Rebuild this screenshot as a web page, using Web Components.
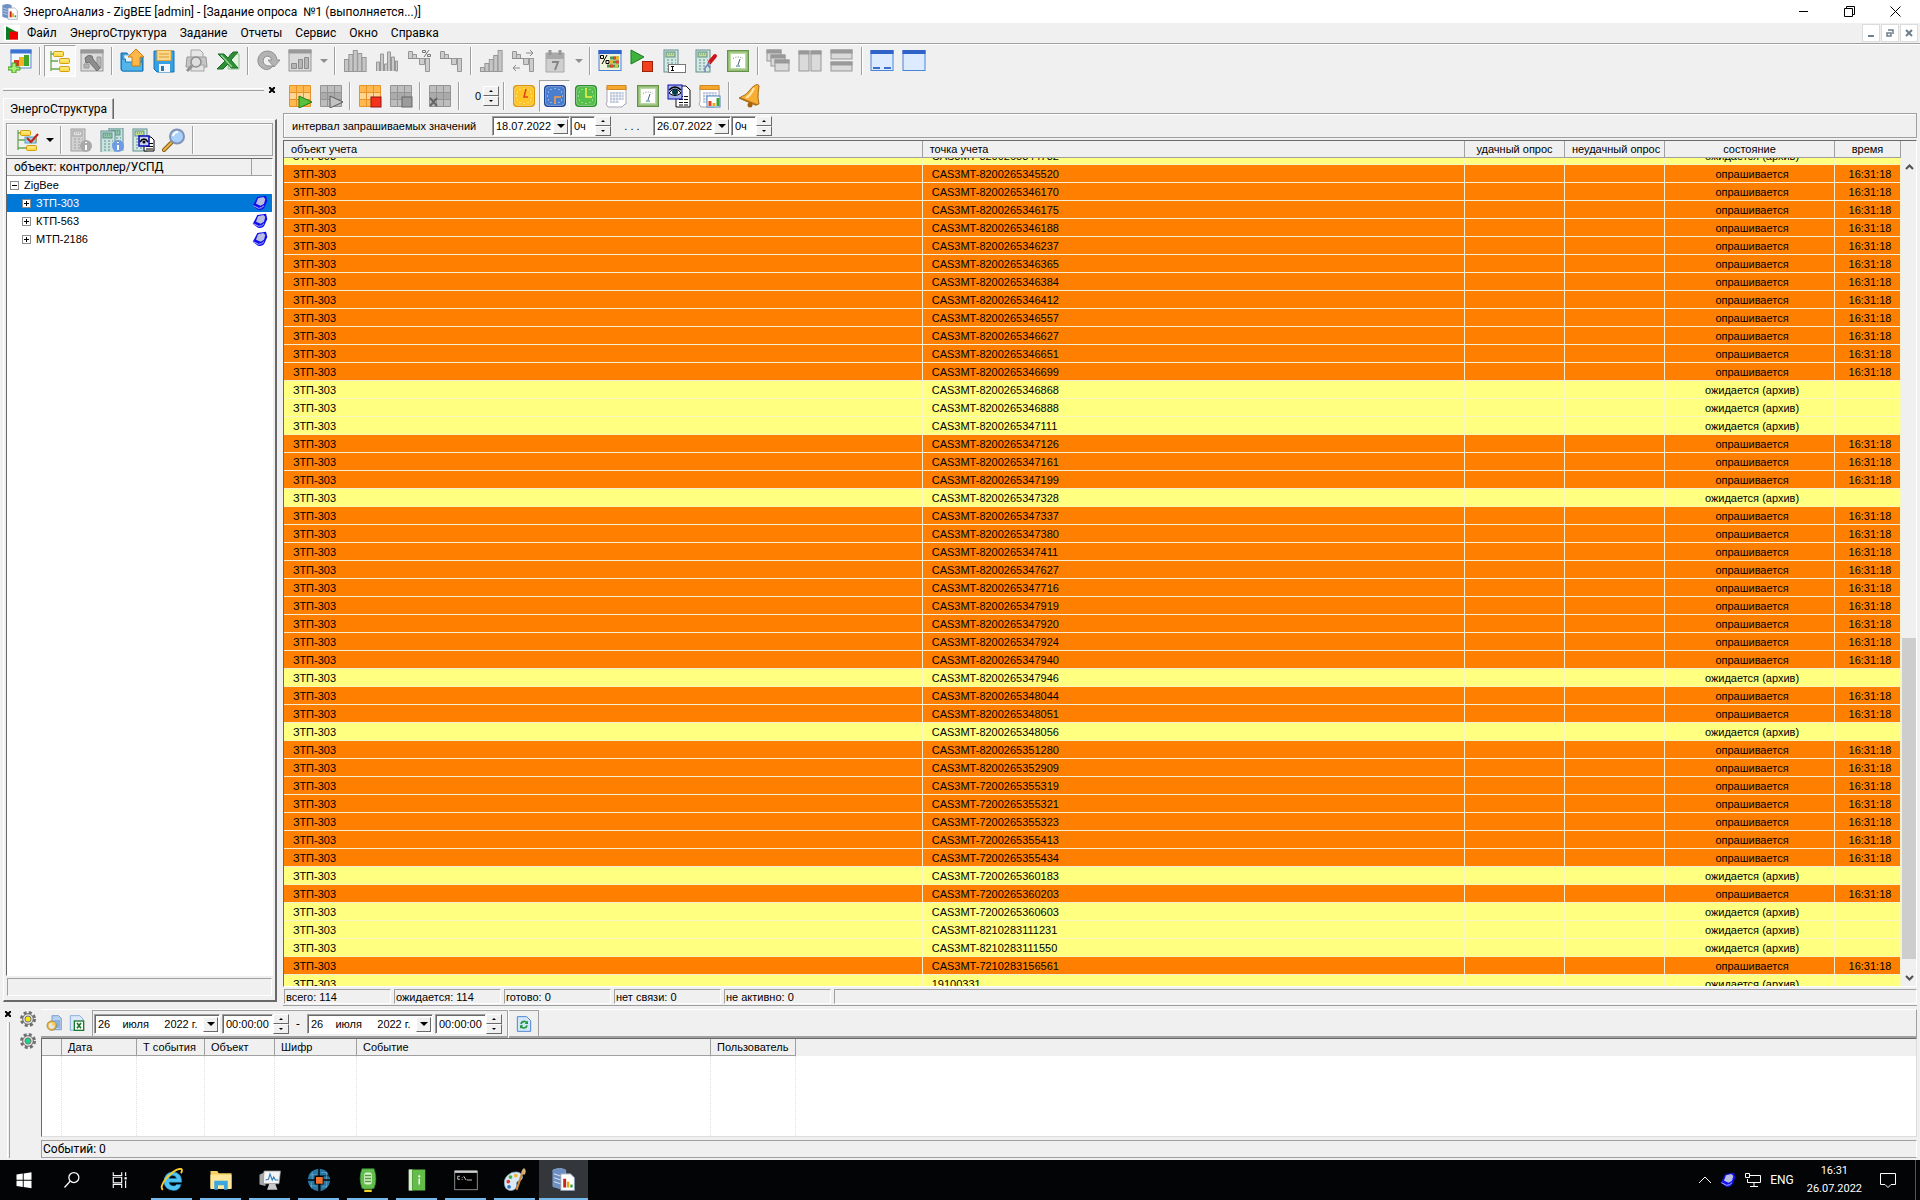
<!DOCTYPE html>
<html lang="ru">
<head>
<meta charset="utf-8">
<title>ЭнергоАнализ - ZigBEE</title>
<style>
    html, body {
        height: 100%;
        margin: 0;
    }
    body {
        --face: #f0f0f0;
        --shadow: #a0a0a0;
        --dark: #696969;
        --ui: Roboto, "Open Sans", sans-serif;
        --grid: "Liberation Sans", Arial, sans-serif;
        display: flex;
        flex-direction: column;
        overflow: hidden;
        background: var(--face);
        color: #000;
        font: 12px/16px var(--ui);
    }
    main {
        flex: 1;
        display: flex;
        min-height: 0;
    }
    .work {
        flex: 1;
        min-width: 0;
        display: flex;
        flex-direction: column;
        padding: 0 3px 0 2px;
    }
</style>
</head>
<body>
    <title-bar>ЭнергоАнализ - ZigBEE [admin] - [Задание опроса &nbsp;№1 (выполняется...)]</title-bar>
    <menu-bar items="Файл|ЭнергоСтруктура|Задание|Отчеты|Сервис|Окно|Справка"></menu-bar>
    <tool-strip></tool-strip>
    <main>
        <structure-dock></structure-dock>
        <div class="work">
            <tool-strip compact></tool-strip>
            <interval-bar></interval-bar>
            <poll-table></poll-table>
            <status-strip items="всего: 114|ожидается: 114|готово: 0|нет связи: 0|не активно: 0|"></status-strip>
        </div>
    </main>
    <event-dock></event-dock>
    <task-bar></task-bar>

<script>
// shared pieces used by several icons
const bars = h => h.map((v, i) => `<rect x="${1.5 + i * 4.4}" y="${22.5 - v}" width="4" height="${v}" fill="#c6c6c6" stroke="#979797"/>`).join("");
const win = (x, y, w, h, head, body, line) => `<rect x="${x}" y="${y}" width="${w}" height="${h}" fill="${body}" stroke="${line}"/><rect x="${x}" y="${y}" width="${w}" height="3" fill="${head}" stroke="${head}"/>`;
const cells = (a, b, c) => `<rect x="1" y="1" width="22" height="22" rx="1" fill="${c}"/>` +
    [0, 1, 2].map(r => [0, 1, 2].map(q => `<rect x="${2 + q * 7}" y="${2 + r * 7}" width="6" height="6" fill="${r == 1 ? b : a}"/>`).join("")).join("");
const meter = (a, b, c) => `<rect x="2" y="1" width="14" height="22" fill="${a}" stroke="${b}"/><rect x="4" y="3" width="9" height="5" fill="${c}" stroke="${b}"/>
    <path d="M6 5h1m1 0h1m1 0h1M5 11h2m2 0h2m2 0h1M5 14h2m2 0h2m2 0h1M5 17h2m2 0h2M5 20h2m2 0h2" stroke="${b}"/>`;
const clock = (a, b, hands, color) => `<rect x="1" y="1" width="22" height="22" rx="4" fill="${b}"/><rect x="2.5" y="2.5" width="19" height="19" rx="3" fill="${a}" stroke="#fff" stroke-opacity=".35"/>
    <path d="M12 4v1M12 19v1M4 12h1M19 12h1M8 5v1M16 5v1M5 8h1M18 8h1M5 16h1M18 16h1M8 18v1M16 18v1" stroke="#fff" stroke-opacity=".8"/><path d="${hands}" fill="none" stroke="${color}" stroke-width="1.5"/>`;
const treeShape = `<path d="M3 2v20M3 5h3M3 12h7M3 20h8" stroke="#6aa552" fill="none" stroke-width="1.3"/>` +
    [[5, 2], [11, 9], [11, 17]].map(p => `<rect x="${p[0]}.5" y="${p[1]}.5" width="10" height="5" rx="1" fill="#ffdc4e" stroke="#d29f12"/><path d="M${p[0] + 2} ${p[1] + 2}h7" stroke="#fff3ac"/>`).join("");
const calendar = `<path d="M2 3h19v17h-1l-3 3H3l-2-3 1-2z" fill="#fff" stroke="#a9a3b4"/><rect x="2" y="1.5" width="19" height="4" fill="#f5a62c" stroke="#d08a20"/><path d="M5 9h13M5 12h13M5 15h13M5 18h9M6 8v11M9 8v11M12 8v11M15 8v8M18 8v8" stroke="#9aa6c8" stroke-width=".7"/>`;
const gear = c => `<circle cx="12" cy="12" r="9.5" fill="none" stroke="#6f6f6f" stroke-width="5" stroke-dasharray="4.3 3.16"/>
    <circle cx="12" cy="12" r="8" fill="#dcdcdc" stroke="#6f6f6f" stroke-width="1.5"/><circle cx="12" cy="12" r="4.5" fill="${c}" stroke="#777" stroke-width="1.5"/>`;
const stepDown = `<path d="M1.5 2.5h4v7h-4zM5.5 5.5h4v4h-4z" fill="#cdcdcd" stroke="#979797"/><path d="M1 9.5h22" stroke="#8e8e8e"/><path d="M12.5 9.5h5v6h-5zM18.5 9.5h4v13h-4z" fill="#cdcdcd" stroke="#979797"/>`;
const screenBlue = win(1, 1.5, 22, 20, "#2f63c8", "#dcebff", "#4a84d6");
const grayWin = (x, y, w, h) => win(x, y, w, h, "#999", "#dadada", "#979797");
const grayCells = cells("#bdbdbd", "#ababab", "#949494");
const orangeCells = cells("#ffb94f", "#ffd694", "#e8932a");
const waterMeter = meter("#d4e8e4", "#5f8e8c", "#c0dc90");

const icons = {
    app: `<path d="M1 2l7-2 6 2v17l-6 2-7-2z" fill="#6d8fc4" stroke="#7f9cc8"/><path d="M2 6l6 2 6-2M2 10l6 2 6-2M2 14l6 2 6-2" stroke="#dbe7f8" fill="none"/><path d="M9 6h10l4 4v13H9z" fill="#fff" stroke="#8b9ab3"/><path d="M13 11v9" stroke="#c9231b" stroke-width="3"/><path d="M16.5 14v6" stroke="#e6a417" stroke-width="2.5"/><path d="M20 17v3" stroke="#36a13a" stroke-width="2.5"/>`,
    mdi: `<rect width="24" height="24" fill="#fff"/><path d="M3 2l17 9v2H9v9H3z" fill="#0a7d1c"/><rect x="9" y="10" width="12" height="12" fill="#f00000"/>`,
    newJob: win(3, 1, 20, 18, "#3c74d4", "#f4f8ff", "#5b87c9") + `<rect x="6" y="11" width="5" height="6" fill="#d93a1c"/><rect x="11" y="8" width="5" height="9" fill="#f0b321"/><rect x="16" y="6" width="5" height="11" fill="#3fa52b"/><path d="M4 14h4v4h4v3H8v3H4v-3H0v-3h4z" fill="#a9ee78" stroke="#3d9b1d"/>`,
    tree: treeShape,
    wrench: grayWin(1, 1, 22, 21) + `<path d="M4 15v4h5v-4zM17 8v11h4V8z" fill="#b5b5b5" stroke="#999"/><path d="M5 9q3-4 7-2l1 3 7 9-3 3-8-9-3 1z" fill="#8d8d8d" stroke="#6f6f6f"/>`,
    open: `<path d="M1 4h6l2 3h14v15H3q-2 0-2-2z" fill="#2b95d8" stroke="#1270b4"/><rect x="4" y="6" width="16" height="12" fill="#e9f5fc" stroke="#7fb6d8"/><path d="M1.5 10h4v3h17v9H3q-1.5 0-1.5-2z" fill="#53b4ea" stroke="#1a7cc0"/><path d="M16 0l8 8h-4v9h-8V8H8z" fill="#ffb74a" stroke="#c97f13"/>`,
    save: `<path d="M2 2h20v21H5l-3-3z" fill="#37a0e2" stroke="#1773b5"/><rect x="5" y="1.5" width="14" height="10" fill="#ffd98a" stroke="#e0a63c"/><path d="M7 5h10M7 8h10" stroke="#d79a35"/><rect x="7" y="15" width="11" height="8" fill="#f2f5f8"/><rect x="9" y="17" width="3" height="5" fill="#2676b0"/>`,
    printView: `<path d="M7 8V1h9l3 3v4" fill="#e6e6e6" stroke="#a5a5a5"/><path d="M3 8h19l1 10H2z" fill="#c6c6c6" stroke="#999"/><rect x="7" y="16" width="13" height="6" fill="#e4e4e4" stroke="#a5a5a5"/><circle cx="12" cy="13" r="5" fill="#dedede" stroke="#8f8f8f" stroke-width="1.5"/><path d="M8 17l-5 5" stroke="#929292" stroke-width="3"/>`,
    excel: `<path d="M14 5h9v15H12z" fill="#e4f3e2" stroke="#8fbf8f"/><path d="M2 5h6l4 4 5-6h5l-7 8 7 8h-7l-3-4-5 5H1l8-8z" fill="#2e8f36" stroke="#1b6b26"/><path d="M5 6l11 12" stroke="#8fd68c" stroke-width="1.5"/>`,
    redo: `<path d="M17 17q-4 5-9 3-7-3-6-10Q4 2 12 2q8 1 9 9h3l-6 7-6-7h4q-1-4-5-4-4 1-4 5 1 5 6 5z" fill="#b3b3b3" stroke="#909090"/>`,
    chartOff: grayWin(1, 1, 22, 21) + `<path d="M3.5 14.5h5v5h-5zM10.5 10.5h4v9h-4zM16.5 8.5h4v11h-4z" fill="#b5b5b5" stroke="#8c8c8c"/>`,
    bars1: bars([12, 17, 21, 18, 14]),
    bars2: `<path d="M1.5 22V13h3v9M5.5 22V5h3v17M9.5 22v-7h3v7M12.5 22V3h3v19M16.5 22V8h3v14M20.5 22V12h2v10z" fill="#c9c9c9" stroke="#979797"/>`,
    stepPct: stepDown + `<path d="M17 8l5-7M15.5 1.5h3v2h-3zM20.5 5.5h3v2h-3z" fill="none" stroke="#777"/>`,
    step: stepDown,
    rise: bars([4, 8, 12, 16, 21]),
    stepMove: stepDown + `<path d="M15 4h7m-3-3l3 3-3 3M9 19H2m3-3l-3 3 3 3" fill="none" stroke="#8a8a8a"/>`,
    dayOff: `<path d="M3 4h18v19H3z" fill="#cfcfcf" stroke="#a8a8a8"/><path d="M3 4h18v6H3z" fill="#a9a9a9"/><path d="M7 1v5M17 1v5" stroke="#979797" stroke-width="3"/><path d="M9 13h6l-3 8" fill="none" stroke="#858585" stroke-width="2"/>`,
    percent: screenBlue + `<path d="M2 5h20v16H2z" fill="#f1f4da"/><path d="M12 9h9M12 13h9M9 17h12" stroke="#3e9d4b" stroke-width="3"/><path d="M15 9h3M18 13h3M12 17h3" stroke="#e2442f" stroke-width="3"/><path d="M18 9h3M12 13h3M17 17h3" stroke="#f2b52a" stroke-width="3"/><path d="M9 6l-5 9M2.5 6.5h3v3h-3zM8 11.5h3v3H8z" fill="none" stroke="#000"/>`,
    runStop: `<path d="M1 1l13 7-13 7z" fill="#3fb13d" stroke="#187d1c"/><rect x="12.5" y="12.5" width="10" height="10" fill="#f0411c" stroke="#9d2308"/>`,
    meterText: waterMeter + `<rect x="6.5" y="15.5" width="17" height="8" fill="#fff" stroke="#777"/><path d="M9 17.5h3M9 21.5h3M10.5 17v5" stroke="#000"/>`,
    meterTool: waterMeter + `<path d="M16 13l5-6" stroke="#d01414" stroke-width="4" stroke-linecap="round"/><path d="M16 13l-5 6v4M14 16l2 3" stroke="#7382bb" fill="none" stroke-width="1.5"/>`,
    gauge: `<rect x="1.5" y="1.5" width="21" height="21" fill="#8fba70" stroke="#64914a"/><rect x="3.5" y="3.5" width="17" height="17" fill="#bcd8a4"/><rect x="5" y="5" width="14" height="14" fill="#fff"/><path d="M7 9.5q5-3 10 0" fill="none" stroke="#555" stroke-width=".8" stroke-dasharray="1 1.5"/><path d="M14 10l-2 6" stroke="#235" stroke-width=".8"/><path d="M10 17h4" stroke="#2a7a80"/>`,
    cascade: grayWin(1, 1, 14, 11) + grayWin(5, 6, 14, 11) + grayWin(9, 11, 14, 11),
    tileV: grayWin(1, 2, 10, 20) + grayWin(13, 2, 10, 20),
    tileH: grayWin(1, 1, 21, 9) + grayWin(1, 13, 21, 9),
    winTray: screenBlue + `<path d="M3 19h7M14 19h7" stroke="#3a70cc" stroke-width="2"/>`,
    winFull: screenBlue,
    gridRun: orangeCells + `<path d="M11 12l13 6-13 6z" fill="#55c13c" stroke="#1d7c16"/>`,
    gridRunOff: grayCells + `<path d="M11 12l13 6-13 6z" fill="#c2c2c2" stroke="#5c5c5c"/>`,
    gridStop: orangeCells + `<rect x="13" y="13" width="10" height="10" fill="#f5331c" stroke="#951414"/>`,
    gridStopOff: grayCells + `<rect x="13" y="13" width="10" height="10" fill="#9b9b9b" stroke="#666"/>`,
    gridClear: grayCells + `<path d="M2 14l7 8M9 14l-7 8" stroke="#666" stroke-width="2"/>`,
    clockY: clock("#ffc425", "#d99708", "M14 5l-2 8h4", "#e2421c"),
    clockB: clock("#4a7fd0", "#1f4596", "M12 20v-7h6", "#ff9b3d"),
    clockG: clock("#56bf4c", "#2c8f2c", "M12 4v9h6", "#f5ef4c"),
    sheet: calendar,
    eyeDoc: `<path d="M9 2h10l4 4v17H9z" fill="#fff" stroke="#111"/><path d="M12 12.5h9M12 15.5h9M12 18.5h9M12 21h9" stroke="#111" stroke-dasharray="4 1"/><rect x="1" y="1" width="14" height="14" fill="#a5b4e8" stroke="#0a0ab8"/><path d="M2 9q6-8 12 0-6 5-12 0z" fill="#fff" stroke="#000"/><circle cx="8" cy="8" r="3" fill="#063b4a"/><path d="M2 6q6-6 12 0" fill="none" stroke="#000" stroke-width="1.5"/>`,
    sheetChart: calendar + `<rect x="9" y="12" width="13" height="11" fill="#fff" stroke="#4f83c0"/><path d="M12 22v-5" stroke="#e2421c" stroke-width="3"/><path d="M16 22v-3" stroke="#f0a71f" stroke-width="3"/><path d="M20 22v-8" stroke="#3ca436" stroke-width="3"/>`,
    bell: `<path d="M17 2q4-3 5 0-1 7-1 12l1 6-4 1L2 14q8-3 11-8 2-3 4-4z" fill="#f6ae35" stroke="#a9690d"/><path d="M17 4q-3 7-8 10" stroke="#ffe7a6" stroke-width="2" fill="none"/><path d="M3 14l17 7" stroke="#b0701a" stroke-width="1.5"/><circle cx="13" cy="21" r="2.5" fill="#a5640c"/>`,
    treeCheck: treeShape + `<rect x="10" y="9" width="11" height="6" fill="#9fd0e8" stroke="#5aa0c0"/><path d="M12 10l4 4 7-8" fill="none" stroke="#c81e10" stroke-width="2"/>`,
    meterInfoOff: meter("#d0d0d0", "#9f9f9f", "#dedede") + `<circle cx="17" cy="18" r="6" fill="#a9a9a9"/><path d="M17 14v1M17 17v5" stroke="#fff" stroke-width="2"/>`,
    metersInfo: `<g transform="translate(7 -1)">${meter("#cbe3de", "#5f8e8c", "#8fc4a8")}</g><g transform="translate(-1 2)">${meter("#cbe3de", "#5f8e8c", "#8fc4a8")}</g><circle cx="18" cy="18" r="6" fill="#6d9be4"/><path d="M18 14v1M18 17v5" stroke="#fff" stroke-width="2"/>`,
    meterEye: waterMeter + `<path d="M13 9h7l3 3v11H13z" fill="#fff" stroke="#000"/><path d="M15 15.5h7M15 18.5h7M15 21h7" stroke="#000"/><rect x="8" y="8" width="10" height="10" fill="#c9d2f4" stroke="#0a0ab8" stroke-width="1.5"/><path d="M9 14q4-6 8 0" fill="none" stroke="#000" stroke-width="1.5"/><circle cx="13" cy="14" r="1.5"/>`,
    lens: `<path d="M9 15l-7 7" stroke="#8a5d17" stroke-width="4" stroke-linecap="round"/><path d="M9 15l-7 7" stroke="#eab54a" stroke-width="2" stroke-linecap="round"/><circle cx="15" cy="8.5" r="7" fill="#a9d1fa" stroke="#8193b8" stroke-width="2"/><path d="M11 8q1-4 5-4" stroke="#fff" stroke-width="2" fill="none"/>`,
    gem: `<path d="M8 3l13-2 2 8-5 11q-4 4-9 2l-8-6 3-5z" fill="#1010ea"/><path d="M9 5l8-2 3 3-2 7-5 3-7-3z" fill="#b9bde0"/><path d="M2 16l8 4q5 0 8-4" stroke="#fff" fill="none"/>`,
    gearY: gear("#f6e60a"),
    gearG: gear("#17d983"),
    clockDoc: `<path d="M9 1h10l4 4v17H9z" fill="#b7d2f2" stroke="#4f7dbd"/><path d="M12 9h9M12 12h9M12 15h9M12 18h9" stroke="#5f8fcb" stroke-width="1.5"/><circle cx="8.5" cy="16" r="7" fill="#efb737" stroke="#8e6d22"/><circle cx="8.5" cy="16" r="4.5" fill="#dfe9f5"/><path d="M9 16v-5h5v5z" fill="#f6cf62"/>`,
    excelDoc: `<path d="M2 1h14l5 5v17H2z" fill="#dbe9fb" stroke="#5b8fd6"/><rect x="8" y="9" width="14" height="14" fill="#fff" stroke="#1b7a2c" stroke-width="2"/><path d="M12 12l6 8M18 12l-6 8" stroke="#1b7a2c" stroke-width="2.5"/>`,
    reloadDoc: `<path d="M2 1h14l6 6v16H2z" fill="#d5e6fb" stroke="#4b86d6" stroke-width="1.5"/><path d="M7.5 12q1-4 5-4 2 0 4 2M16.5 14q-1 4-5 4-2 0-4-2" fill="none" stroke="#1f9a3a" stroke-width="2.5"/><path d="M18 7v5h-5zM6 19v-5h5z" fill="#1f9a3a"/>`
};

// icons of the task bar, 32 units wide
const taskIcons = {
    start: `<path d="M4 7l10-1.5v10H4zM15.5 5.5L28 3.5v12H15.5zM4 17h10v10L4 25.5zM15.5 17H28v12l-12.5-2z" fill="#fff"/>`,
    search: `<circle cx="19" cy="12" r="8" fill="none" stroke="#fff" stroke-width="2"/><path d="M13 18L4 28" stroke="#fff" stroke-width="2"/>`,
    view: `<path d="M4 2v6h15V2M4 30v-6h15v6M4 11h15v10H4zM26 2v7M26 17v13" fill="none" stroke="#fff" stroke-width="2"/><rect x="24" y="11" width="4" height="4" fill="#fff"/>`,
    ie: `<path d="M29 19H12q1 5 6 5 3 0 4-2h6q-2 8-10 8Q6 29 5 18 6 6 17 5q12 1 12 14zM12 14h10q-1-4-5-4t-5 4z" fill="#4fc3f2" stroke="#1c85c8" stroke-width=".7"/><path d="M4 29Q-1 26 8 14 19 2 27 1q4 0 1 6" fill="none" stroke="#f7c92b" stroke-width="2.5"/>`,
    folder: `<path d="M2 4h9l2 3h17v20H2z" fill="#f6cf62"/><path d="M2 9h28v19H2z" fill="#ffe69a"/><path d="M7 29V17h18v12h-5v-6h-8v6z" fill="#3ba7dc"/>`,
    monitor: `<path d="M2 9l8-4v19l-8-2z" fill="#a8a8a8"/><path d="M8 4h22l-2 17H7z" fill="#f4f4f4" stroke="#8c8c8c"/><path d="M10 16l4-1 2-7 3 8 2-4 2 4h4" fill="none" stroke="#2f7ec2" stroke-width="1.5"/><path d="M15 21h8l3 8H12z" fill="#c8c8c8"/>`,
    globe: `<path d="M15 1v9h-5v5H1Q2 3 15 1zM17 1q10 1 12 9H17zM31 17q-2 11-13 14v-9h4v-5zM1 17h9v5h5v9Q3 29 1 17zM22 11h7q2 2 2 4h-9z" fill="#2878a4"/><path d="M4 9h9M7 5v10M26 6v9M19 6h8M4 24h9M6 19v8M20 25h7M26 18v8" stroke="#7fb9d8" stroke-width=".7"/><rect x="12" y="12" width="9" height="9" fill="#f0722c"/>`,
    phone: `<path d="M8 1h16q5 14 0 26l-3 1H11l-3-1Q3 14 8 1z" fill="#63bd4f" stroke="#2e8a2c"/><rect x="11" y="6" width="10" height="16" rx="3" fill="#dff2d0"/><path d="M12 10h8M12 14h8M12 18h8" stroke="#4a9e3c" stroke-width="2"/><path d="M11 29h10v3H11z" fill="#f0d524"/>`,
    book: `<path d="M5 2h22v28H5z" fill="#64bd49"/><path d="M5 2h5v28H5z" fill="#d9efd0"/><path d="M10 2v28" stroke="#3c8f2a"/><circle cx="19" cy="11" r="1.5" fill="#fff"/><path d="M19 14v8" stroke="#fff" stroke-width="2"/>`,
    console: `<rect x="1" y="4" width="30" height="25" fill="#000" stroke="#b5b5b5"/><path d="M1 5h30" stroke="#d0d0d0" stroke-width="3"/><path d="M8 11H5v4h3M11 12v1M11 15v1M13 11l3 5M17 16h7" stroke="#fff" fill="none"/>`,
    paint: `<path d="M2 22Q0 12 12 6q12-3 14 6 0 4-4 5-4 0-4 4 1 8-7 9-8 0-9-8z" fill="#d9e9f5" stroke="#8aa7c4"/><circle cx="7" cy="18" r="2.5" fill="#e03b32"/><circle cx="10" cy="12" r="2.5" fill="#4cae3e"/><circle cx="17" cy="10" r="2.5" fill="#f0b62b"/><circle cx="8" cy="25" r="2.5" fill="#2d72c4"/><path d="M27 3l-9 26" stroke="#c98a3c" stroke-width="3"/><path d="M25 8q-1-5 3-8 4 3 1 9z" fill="#d8b072"/>`,
    energy: `<g transform="scale(1.3)">${icons.app}</g>`
};

class BaseElement extends HTMLElement {
    constructor() {
        super();
        this.shadow = this.attachShadow({ mode: "open" });
    }
    connectedCallback() {
        this.shadow.innerHTML = `<style>
            :host, * { box-sizing: border-box; }
            button { font: inherit; color: inherit; background: none; border: 0; padding: 0; margin: 0; }
            ${this.css()}
        </style>${this.html()}`;
    }
    css() { return ""; }
    html() { return ""; }
    attr(name, fallback = "") { return this.getAttribute(name) ?? fallback; }
}

customElements.define("svg-icon", class extends BaseElement {
    css() {
        const size = this.attr("size", "24");
        return `:host { display: block; flex: none; width: ${size}px; height: ${size}px; } svg { display: block; width: 100%; height: 100%; }`;
    }
    html() {
        const task = this.hasAttribute("task");
        const box = task ? 32 : 24;
        return `<svg viewBox="0 0 ${box} ${box}" aria-hidden="true">${(task ? taskIcons : icons)[this.attr("name")]}</svg>`;
    }
});

customElements.define("title-bar", class extends BaseElement {
    css() {
        return `
        :host { display: flex; align-items: center; height: 23px; flex: none; background: #fff; padding-left: 2px; gap: 5px; }
        span { flex: 1; white-space: nowrap; }
        button { width: 46px; height: 23px; display: grid; place-items: center; }
        svg { width: 11px; height: 11px; fill: none; stroke: #000; }
        nav { display: flex; padding-right: 2px; }`;
    }
    html() {
        return `<svg-icon name="app" size="16"></svg-icon><span><slot></slot></span>
        <nav>
            <button aria-label="Свернуть"><svg viewBox="0 0 11 11"><path d="M1 5.5h9"/></svg></button>
            <button aria-label="Восстановить"><svg viewBox="0 0 11 11"><path d="M.5 2.5h8v8h-8zM2.5 2.5v-2h8v8h-2"/></svg></button>
            <button aria-label="Закрыть"><svg viewBox="0 0 11 11"><path d="M.5.5l10 10M10.5.5l-10 10"/></svg></button>
        </nav>`;
    }
});

customElements.define("menu-bar", class extends BaseElement {
    css() {
        return `
        :host { display: flex; align-items: center; height: 21px; flex: none; padding: 0 2px 1px 4px; border-bottom: 1px solid var(--shadow); box-shadow: 0 1px #fff; }
        nav { flex: 1; display: flex; gap: 13px; padding-left: 7px; }
        .mdi { display: flex; gap: 1px; }
        .mdi button { width: 18px; height: 18px; background: #fff; border: 1px solid #dcdcdc; display: grid; place-items: center; }
        .mdi svg { width: 8px; height: 8px; fill: none; stroke: #6d7f8c; stroke-width: 2; }`;
    }
    html() {
        const items = this.attr("items").split("|").map(t => `<button>${t}</button>`).join("");
        return `<svg-icon name="mdi" size="16"></svg-icon><nav>${items}</nav>
        <div class="mdi">
            <button aria-label="Свернуть окно"><svg viewBox="0 0 8 8"><path d="M1 7h6"/></svg></button>
            <button aria-label="Восстановить окно"><svg viewBox="0 0 8 8"><path d="M1 4h4v3H1zM2 1h5v4" stroke-width="1.5"/></svg></button>
            <button aria-label="Закрыть окно"><svg viewBox="0 0 8 8"><path d="M1 1l6 6M7 1L1 7"/></svg></button>
        </div>`;
    }
});

customElements.define("tool-button", class extends BaseElement {
    css() {
        return `
        :host { display: block; flex: none; }
        button { display: grid; place-items: center; width: var(--slot, 32px); height: 32px; border: 1px solid transparent; }
        :host([pressed]) button { border-color: var(--shadow) #fff #fff var(--shadow); background: #f8f8f8; }`;
    }
    html() {
        return `<button aria-label="${this.attr("label")}"><svg-icon name="${this.attr("icon")}"></svg-icon></button>`;
    }
});

customElements.define("drop-arrow", class extends BaseElement {
    css() {
        return `
        :host { display: block; flex: none; width: 15px; }
        button { display: grid; place-items: center; width: 100%; height: 32px; }
        i { border: 4px solid transparent; border-top-color: ${this.attr("color", "#909090")}; border-bottom: 0; }`;
    }
    html() { return `<button aria-label="Ещё"><i></i></button>`; }
});

customElements.define("tool-sep", class extends BaseElement {
    css() { return `:host { display: block; flex: none; width: 2px; height: 28px; margin: 0 3px; border-left: 1px solid var(--shadow); border-right: 1px solid #fff; }`; }
});

customElements.define("spin-buttons", class extends BaseElement {
    css() {
        return `
        :host { display: flex; flex-direction: column; width: 16px; flex: none; align-self: stretch; }
        button { flex: 1; display: grid; place-items: center; background: var(--face); border: 1px solid; border-color: #fff var(--dark) var(--dark) #fff; }
        i { border: 2px solid transparent; border-bottom-color: #000; border-top: 0; }
        button + button i { border-top: 2px solid #000; border-bottom: 0; }`;
    }
    html() { return `<button aria-label="Больше"><i></i></button><button aria-label="Меньше"><i></i></button>`; }
});

customElements.define("value-field", class extends BaseElement {
    css() {
        return `
        :host { display: flex; flex: none; height: 20px; }
        div { display: flex; border: 1px solid; border-color: var(--shadow) #fff #fff var(--shadow); background: #fff; box-shadow: inset 1px 1px var(--dark); padding: 2px 1px 1px 2px; }
        input { width: ${this.attr("width", "20")}px; border: 0; padding: 0 1px; background: none; font: 11px/15px var(--grid); color: #000; outline: 0; }
        :host([flat]) div { border: 0; background: none; box-shadow: none; }
        :host([flat]) input { text-align: right; }
        .drop { width: 15px; background: var(--face); border: 1px solid; border-color: #fff var(--dark) var(--dark) #fff; display: grid; place-items: center; }
        .drop i { border: 4px solid transparent; border-top-color: #000; border-bottom: 0; }`;
    }
    html() {
        return `<div><input type="text" value="${this.attr("value")}" aria-label="${this.attr("label")}">
        ${this.hasAttribute("drop") ? '<button class="drop" aria-label="Открыть календарь"><i></i></button>' : ""}</div>
        ${this.hasAttribute("spin") ? "<spin-buttons></spin-buttons>" : ""}`;
    }
});

const mainTools = ["newJob:Создать", "|", "tree:Структура:pressed", "wrench:Настройка", "|", "open:Открыть", "save:Сохранить", "printView:Просмотр", "excel:Excel",
    "|", "redo:Обновить", "chartOff:График", ">", "|", "bars1:Столбцы", "bars2:Группы", "stepPct:Проценты", "step:Ступени",
    "|", "rise:Рост", "stepMove:Сдвиг", "dayOff:Дата", ">", "|", "percent:Сводка", "runStop:Опрос", "meterText:Прибор", "meterTool:Ремонт прибора", "gauge:Показания",
    "|", "cascade:Каскад", "tileV:Рядом", "tileH:Стопкой", "|", "winTray:Панель задач", "winFull:Полный экран"];
const pollTools = ["gridRun:Запуск", "gridRunOff:Запуск выбранных", "|", "gridStop:Стоп", "gridStopOff:Стоп выбранных", "|", "gridClear:Очистить", "|", "#", "|",
    "clockY:Получас", "clockB:Час:pressed", "clockG:Сутки", "sheet:Месяц", "gauge:Показания", "eyeDoc:Журнал", "sheetChart:Отчет", "|", "bell:Оповещение"];

customElements.define("tool-strip", class extends BaseElement {
    css() {
        return `
        :host { display: flex; align-items: center; flex: none; height: 35px; padding: 0 0 2px 4px; }
        :host([compact]) { --slot: 31px; padding: 0 0 0 1px; height: 34px; }
        value-field { margin: 0 1px 0 2px; }`;
    }
    html() {
        const list = this.hasAttribute("compact") ? pollTools : mainTools;
        return list.map(t => {
            if (t === "|") return "<tool-sep></tool-sep>";
            if (t === ">") return "<drop-arrow></drop-arrow>";
            if (t === "#") return '<value-field flat spin value="0" width="15" label="Повторы"></value-field>';
            const [icon, label, state = ""] = t.split(":");
            return `<tool-button icon="${icon}" label="${label}" ${state}></tool-button>`;
        }).join("");
    }
});

customElements.define("structure-dock", class extends BaseElement {
    css() {
        return `
        :host { display: flex; flex-direction: column; width: 281px; flex: none; padding: 6px 3px 4px; }
        .grip { display: flex; align-items: center; gap: 4px; height: 9px; }
        .grip i { flex: 1; height: 3px; border-top: 1px solid #fff; border-bottom: 1px solid var(--shadow); }
        .grip button { width: 8px; height: 8px; margin-right: 2px; display: grid; place-items: center; }
        svg { width: 6px; height: 6px; stroke: #000; stroke-width: 2; }
        .tab { align-self: flex-start; height: 21px; margin-top: 4px; padding: 0 6px; border: solid; border-width: 1px 1px 0; border-color: #fff var(--dark) #fff #fff; box-shadow: inset -1px 0 var(--shadow); }
        .panel { flex: 1; min-height: 0; display: flex; flex-direction: column; margin-right: 1px; gap: 2px; padding: 3px 2px 4px; border: solid; border-width: 1px 2px 2px 1px; border-color: #fff var(--dark) var(--dark) #fff; }
        .tools { --slot: 31px; display: flex; align-items: center; height: 33px; flex: none; padding-left: 4px; border: 1px solid var(--shadow); box-shadow: inset 1px 1px #fff; }
        .tree { flex: 1; display: flex; flex-direction: column; background: #fff; border: 1px solid; border-color: var(--dark) #fff #fff var(--dark); font: 11px/18px var(--grid); }
        .head { display: flex; height: 17px; background: var(--face); border-bottom: 1px solid var(--shadow); font: 12px/17px var(--ui); }
        .head span { flex: 1; padding-left: 7px; border-right: 1px solid var(--shadow); }
        .head b { width: 20px; }
        ul { list-style: none; margin: 0; padding: 0; }
        li { display: flex; align-items: center; height: 18px; padding-left: 15px; gap: 5px; }
        li.root { padding-left: 3px; }
        li span { flex: 1; }
        li svg-icon { margin-right: 4px; }
        li.on { background: #0078d7; color: #fff; }
        li button { width: 9px; height: 9px; border: 1px solid #8c8c8c; display: grid; place-items: center; background: #fff; }
        li button svg { width: 5px; height: 5px; stroke-width: 1; fill: none; }
        .foot { height: 18px; margin: 0 1px; border: 1px solid; border-color: var(--shadow) #fff #fff var(--shadow); }`;
    }
    html() {
        const box = d => `<button aria-label="Развернуть"><svg viewBox="0 0 5 5"><path d="${d}"/></svg></button>`;
        const leaf = (name, on) => `<li role="treeitem" class="${on ? "on" : ""}">${box("M0 2.5h5M2.5 0v5")}<span>${name}</span><svg-icon name="gem" size="16"></svg-icon></li>`;
        return `
        <div class="grip"><i></i><button aria-label="Закрыть панель"><svg viewBox="0 0 6 6"><path d="M0 0l6 6M6 0L0 6"/></svg></button></div>
        <button class="tab">ЭнергоСтруктура</button>
        <div class="panel">
            <div class="tools">
                <tool-button icon="treeCheck" label="Выбор"></tool-button><drop-arrow color="#000"></drop-arrow><tool-sep></tool-sep>
                <tool-button icon="meterInfoOff" label="Свойства"></tool-button><tool-button icon="metersInfo" label="Приборы"></tool-button>
                <tool-button icon="meterEye" label="Журнал прибора"></tool-button><tool-button icon="lens" label="Поиск"></tool-button><tool-sep></tool-sep>
            </div>
            <div class="tree">
                <div class="head"><span>объект: контроллер/УСПД</span><b></b></div>
                <ul role="tree">
                    <li role="treeitem" class="root">${box("M0 2.5h5")}<span>ZigBee</span></li>
                    ${leaf("ЗТП-303", true)}${leaf("КТП-563")}${leaf("МТП-2186")}
                </ul>
            </div>
            <div class="foot"></div>
        </div>`;
    }
});

customElements.define("interval-bar", class extends BaseElement {
    css() {
        return `
        :host { display: flex; align-items: center; flex: none; height: 25px; padding-left: 8px; margin-bottom: 2px; border: 1px solid var(--shadow); box-shadow: inset 1px 1px #fff; font: 11px/16px var(--grid); }
        .title { width: 200px; white-space: nowrap; }
        .pair { display: flex; }
        .dots { width: 42px; text-align: center; }`;
    }
    html() {
        const pair = (date, name) => `<div class="pair"><value-field drop value="${date}" width="58" label="${name}"></value-field><value-field spin value="0ч" width="20" label="${name}, час"></value-field></div>`;
        return `<span class="title">интервал запрашиваемых значений</span>${pair("18.07.2022", "начало")}<span class="dots">. . .</span>${pair("26.07.2022", "конец")}`;
    }
});

customElements.define("status-strip", class extends BaseElement {
    css() {
        return `
        :host { display: flex; gap: 3px; flex: none; height: 19px; padding: 2px 0 1px 1px; font: 11px/14px var(--grid); border-bottom: 1px solid var(--shadow); }
        span { width: 107px; padding-left: 1px; border: 1px solid; border-color: var(--shadow) #fff #fff var(--shadow); white-space: nowrap; }
        span:last-child { flex: 1; }`;
    }
    html() { return this.attr("items").split("|").map(t => `<span>${t}</span>`).join(""); }
});

customElements.define("event-dock", class extends BaseElement {
    css() {
        return `
        :host { display: flex; flex: none; height: 154px; padding: 3px 3px 2px 4px; }
        .side { display: flex; flex-direction: column; align-items: center; width: 8px; gap: 5px; padding-top: 2px; }
        .side i { flex: 1; width: 3px; border-left: 1px solid #fff; border-right: 1px solid var(--shadow); }
        .side svg { width: 6px; height: 6px; stroke: #000; stroke-width: 2; display: block; }
        .gears { display: flex; flex-direction: column; gap: 6px; padding: 2px 5px 0 8px; }
        .body { flex: 1; display: flex; flex-direction: column; min-width: 0; }
        .tools { display: flex; align-items: center; gap: 7px; height: 29px; padding-left: 5px; border-top: 1px solid #fff; border-right: 1px solid var(--shadow); border-bottom: 2px solid var(--shadow); }
        .range { display: flex; align-items: center; align-self: stretch; gap: 2px; padding: 0 6px 0 1px; border: 1px solid var(--shadow); border-bottom: 0; }
        .range span { width: 14px; text-align: center; }
        .range svg-icon { margin-left: 2px; }
        .list { flex: 1; background: #fff; border: 1px solid; border-color: var(--dark) #dcdcdc #dcdcdc var(--dark); display: flex; }
        table { width: 100%; table-layout: fixed; border-collapse: separate; border-spacing: 0; }
        th { height: 17px; padding: 0 0 0 6px; font: 11px/16px var(--grid); text-align: left; background: var(--face); border-right: 1px solid var(--shadow); border-bottom: 1px solid var(--shadow); white-space: nowrap; }
        td { border-right: 1px dotted #e0e0e0; }
        th:last-child, td:last-child { border: 0; }
        .foot { height: 18px; margin-top: 3px; padding-left: 1px; border: 1px solid; border-color: var(--shadow) #fff var(--shadow) var(--shadow); }`;
    }
    html() {
        const pair = name => `<value-field drop value="26    июля     2022 г." width="106" label="Дата, ${name}"></value-field><value-field spin value="00:00:00" width="46" label="Время, ${name}"></value-field>`;
        const cols = [["", 20], ["Дата", 75], ["Т события", 68], ["Объект", 70], ["Шифр", 82], ["Событие", 354], ["Пользователь", 85], ["", 0]];
        return `
        <div class="side"><button aria-label="Закрыть панель событий"><svg viewBox="0 0 6 6"><path d="M0 0l6 6M6 0L0 6"/></svg></button><i></i></div>
        <div class="gears"><button aria-label="Настройка"><svg-icon name="gearY" size="16"></svg-icon></button><button aria-label="Сервер"><svg-icon name="gearG" size="16"></svg-icon></button></div>
        <div class="body">
            <div class="tools">
                <button aria-label="Журнал"><svg-icon name="clockDoc" size="16"></svg-icon></button>
                <button aria-label="В Excel"><svg-icon name="excelDoc" size="16"></svg-icon></button>
                <div class="range">${pair("от")}<span>-</span>${pair("до")}<tool-sep></tool-sep><button aria-label="Обновить"><svg-icon name="reloadDoc" size="16"></svg-icon></button></div>
            </div>
            <div class="list"><table>
                <colgroup>${cols.map(c => `<col${c[1] ? ` style="width:${c[1]}px"` : ""}>`).join("")}</colgroup>
                <thead><tr>${cols.map(c => `<th>${c[0]}</th>`).join("")}</tr></thead>
                <tbody><tr>${"<td></td>".repeat(8)}</tr></tbody>
            </table></div>
            <div class="foot">Событий: 0</div>
        </div>`;
    }
});

customElements.define("task-bar", class extends BaseElement {
    css() {
        return `
        :host { display: flex; flex: none; height: 40px; background: #020406; color: #fff; }
        .apps { flex: 1; display: flex; }
        .apps button { width: 48px; height: 40px; display: grid; place-items: center; }
        .apps .run { width: 49px; position: relative; }
        .run::after { content: ""; position: absolute; left: 4px; right: 4px; bottom: 0; height: 2px; background: #76b9ed; }
        .apps .on { background: #33363a; }
        .apps .on::after { left: 0; right: 0; }
        .apps .first { margin-left: 3px; }
        .tray { display: flex; align-items: center; padding-right: 4px; }
        .tray svg { display: block; fill: none; stroke: #fff; }
        .tray button { padding: 0 4px; }
        .time { padding: 0 13px 0 9px; text-align: center; font-size: 11px; line-height: 18px; }
        .end { width: 1px; height: 40px; background: #555; margin-left: 14px; }`;
    }
    html() {
        const run = ["ie", "folder", "monitor", "globe", "phone", "book", "console", "paint", "energy"];
        const app = (n, cls, size) => `<button class="${cls}" aria-label="${n}"><svg-icon task name="${n}" size="${size}"></svg-icon></button>`;
        return `
        <div class="apps">${app("start", "", 20)}${app("search", "", 20)}${app("view", "", 18)}
            ${run.map((n, i) => app(n, "run" + (i ? "" : " first") + (n === "energy" ? " on" : ""), 24)).join("")}</div>
        <div class="tray">
            <button aria-label="Скрытые значки"><svg width="14" height="8" viewBox="0 0 14 8"><path d="M1 7l6-6 6 6"/></svg></button>
            <button aria-label="Опрос"><svg-icon name="gem" size="16"></svg-icon></button>
            <button aria-label="Сеть"><svg width="18" height="16" viewBox="0 0 18 16"><path d="M6 3.5h10.5v7h-13V7M1.5 1.5h4v4h-4zM10 11v3.5M6 14.5h8"/></svg></button>
            <button>ENG</button>
            <div class="time">16:31<br>26.07.2022</div>
            <button aria-label="Уведомления"><svg width="18" height="18" viewBox="0 0 18 18"><path d="M1.5 2.5h15v11H12l-3 3-3-3H1.5z"/></svg></button>
            <div class="end"></div>
        </div>`;
    }
});

// points of metering; "-" in front marks a point that still waits
const points = `-8200265344732 8200265345520 8200265346170 8200265346175 8200265346188 8200265346237 8200265346365 8200265346384
    8200265346412 8200265346557 8200265346627 8200265346651 8200265346699 -8200265346868 -8200265346888 -8200265347111
    8200265347126 8200265347161 8200265347199 -8200265347328 8200265347337 8200265347380 8200265347411 8200265347627
    8200265347716 8200265347919 8200265347920 8200265347924 8200265347940 -8200265347946 8200265348044 8200265348051
    -8200265348056 8200265351280 8200265352909 7200265355319 7200265355321 7200265355323 7200265355413 7200265355434
    -7200265360183 7200265360203 -7200265360603 -8210283111231 -8210283111550 7210283156561 -19100331`.split(/\s+/);

// defined last: scrollTop only sticks when the docks around have their height
customElements.define("poll-table", class extends BaseElement {
    connectedCallback() {
        super.connectedCallback();
        // list is scrolled a little past the start of its first row
        this.shadow.querySelector(".list").scrollTop = 11;
    }
    css() {
        return `
        :host { display: flex; flex: 1; min-height: 0; border: 1px solid; border-color: var(--dark) #fff #fff var(--dark); font: 11px/16px var(--grid); }
        .list { flex: 1; overflow: hidden; }
        table { width: 100%; table-layout: fixed; border-collapse: separate; border-spacing: 0; }
        th { position: sticky; top: 0; height: 17px; padding: 0 7px; font-weight: normal; white-space: nowrap; background: var(--face); border-right: 1px solid var(--shadow); border-bottom: 1px solid var(--shadow); }
        th:nth-child(-n+2) { text-align: left; }
        td { height: 18px; padding: 0 9px; background: #ff8000; border-right: 1px solid #f4efd4; border-bottom: 1px solid #f4efd4; white-space: nowrap; }
        td:nth-child(n+3) { text-align: center; padding: 0 0 0 5px; }
        .wait td { background: #ffff80; border-color: #f8f6c0; }
        .bar { width: 15px; display: flex; flex-direction: column; align-items: center; padding: 22px 0 4px 1px; }
        .bar svg { width: 9px; height: 9px; fill: none; stroke: #505050; stroke-width: 2; flex: none; }
        .track { flex: 1; align-self: stretch; display: flex; flex-direction: column; margin: 3px 0; }
        .track i { flex: 464; }
        .track b { flex: 321; background: #cdcdcd; }
        .track u { flex: 11; }`;
    }
    html() {
        const rows = points.map(p => {
            const wait = p[0] === "-";
            const num = p.replace("-", "");
            return `<tr class="${wait ? "wait" : ""}"><td>ЗТП-303</td><td>${num.length > 8 ? "CAS3MT-" : ""}${num}</td><td></td><td></td><td>${wait ? "ожидается (архив)" : "опрашивается"}</td><td>${wait ? "" : "16:31:18"}</td></tr>`;
        }).join("");
        return `<div class="list"><table>
            <colgroup><col style="width:39.5%"><col><col style="width:100px"><col style="width:100px"><col style="width:170px"><col style="width:66px"></colgroup>
            <thead><tr><th>объект учета</th><th>точка учета</th><th>удачный опрос</th><th>неудачный опрос</th><th>состояние</th><th>время</th></tr></thead>
            <tbody>${rows}</tbody></table></div>
        <div class="bar"><svg viewBox="0 0 9 9"><path d="M1 6l3.5-3.5L8 6"/></svg><div class="track"><i></i><b></b><u></u></div><svg viewBox="0 0 9 9"><path d="M1 3l3.5 3.5L8 3"/></svg></div>`;
    }
});
</script>
</body>
</html>
